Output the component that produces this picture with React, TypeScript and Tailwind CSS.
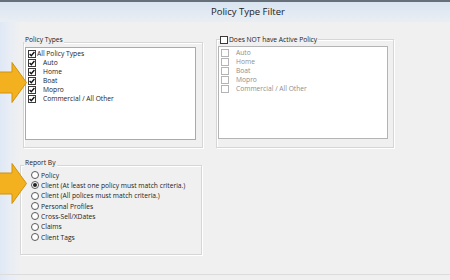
const POLICY_TYPES = ['Auto', 'Home', 'Boat', 'Mopro', 'Commercial / All Other']

const REPORT_BY = [
  'Policy',
  'Client (At least one policy must match criteria.)',
  'Client (All polices must match criteria.)',
  'Personal Profiles',
  'Cross-Sell/XDates',
  'Claims',
  'Client Tags',
]

const font = { fontFamily: '"Open Sans", "Liberation Sans", Arial, sans-serif' }

function CheckBox({ checked, disabled }: { checked?: boolean; disabled?: boolean }) {
  return (
    <span
      className={
        'w-[8px] h-[8px] flex-shrink-0 bg-white border flex items-center justify-center ' +
        (disabled ? 'border-[#b4b4b4]' : 'border-[#3a3a3a]')
      }
    >
      {checked && (
        <svg width="6" height="6" viewBox="0 0 6 6">
          <path d="M0.6 3 L2.3 4.8 L5.4 1" fill="none" stroke="#111" strokeWidth="1.4" />
        </svg>
      )}
    </span>
  )
}

function Radio({ selected }: { selected?: boolean }) {
  return (
    <span className="w-[8px] h-[8px] flex-shrink-0 rounded-full bg-white border border-[#5a5a5a] flex items-center justify-center">
      {selected && <span className="w-[4px] h-[4px] rounded-full bg-[#222]" />}
    </span>
  )
}

function Arrow({ top }: { top: number }) {
  return (
    <svg className="absolute left-0" style={{ top }} width="28" height="41" viewBox="0 0 28 41">
      <path d="M-1 10 H12 V0.5 L26.5 20.5 L12 40.5 V31 H-1 Z" fill="#f3b11f" stroke="#cf920c" strokeWidth="1" />
    </svg>
  )
}

export default function App() {
  return (
    <div
      className="relative w-[450px] h-[280px] overflow-hidden flex flex-col text-[#1b1b1b] bg-[linear-gradient(to_right,#dfe8f5_0px,#e8edf5_9px,#f0f0f0_22px)]"
      style={font}
    >
      {/* window edge + title */}
      <div className="h-[2px] bg-[#67707a]" />
      <div className="h-[20px] flex items-center bg-gradient-to-b from-[#d9e4f1] to-[#eaeef4]">
        <span className="ml-[211px] text-[9.5px] text-[#222]">Policy Type Filter</span>
      </div>

      {/* policy type groups */}
      <div className="flex items-start mt-[20px]">
        <div className="relative ml-[23px] w-[180px] h-[106px] border border-[#d6d6d6] shadow-[inset_1px_1px_0_#fff,1px_1px_0_#fff]">
          <span className="absolute -top-[8px] left-0 px-[1px] text-[6.7px] leading-[9px] bg-[#f0f0f0]">Policy Types</span>
          <div className="mt-[4px] ml-[1px] w-[171px] h-[93px] bg-white border border-[#aaaaaa] pl-[2px]">
            <div className="flex items-center h-[9px] mt-[1px]">
              <CheckBox checked />
              <span className="ml-[1px] text-[6.7px] leading-[9px]">All Policy Types</span>
            </div>
            {POLICY_TYPES.map((t) => (
              <div key={t} className="flex items-center h-[9px]">
                <CheckBox checked />
                <span className="ml-[7px] text-[6.7px] leading-[9px]">{t}</span>
              </div>
            ))}
          </div>
        </div>

        <div className="relative ml-[13px] -mt-[3px] w-[178px] h-[109px] border border-[#d6d6d6] shadow-[inset_1px_1px_0_#fff,1px_1px_0_#fff]">
          <div className="absolute -top-[5px] left-[3px] flex items-center pr-[1px] bg-[#f0f0f0]">
            <CheckBox />
            <span className="ml-[1px] text-[6.7px] leading-[9px]">Does NOT have Active Policy</span>
          </div>
          <div className="mt-[6px] ml-[1px] w-[170px] h-[93px] bg-white border border-[#b4b4b4] pl-[2px]">
            {POLICY_TYPES.map((t, i) => (
              <div key={t} className={'flex items-center h-[9px]' + (i === 0 ? ' mt-[1px]' : '')}>
                <CheckBox disabled />
                <span className="ml-[7px] text-[6.7px] leading-[9px] text-[#8e8e8e]">{t}</span>
              </div>
            ))}
          </div>
        </div>
      </div>

      {/* report by */}
      <div className="relative mt-[17px] ml-[20px] w-[182px] h-[90px] border border-[#d6d6d6] shadow-[inset_1px_1px_0_#fff,1px_1px_0_#fff] pt-[4px] pl-[10px]">
        <span className="absolute -top-[8px] left-[3px] px-[1px] text-[6.7px] leading-[9px] bg-[#f0f0f0]">Report By</span>
        {REPORT_BY.map((r, i) => (
          <div key={r} className="flex items-center h-[10.33px]">
            <Radio selected={i === 1} />
            <span className="ml-[2px] text-[6.7px] leading-[9px]">{r}</span>
          </div>
        ))}
      </div>

      <div className="mt-auto h-[6px] border-t border-[#dcdcdc]" />

      <Arrow top={62} />
      <Arrow top={163} />
    </div>
  )
}
